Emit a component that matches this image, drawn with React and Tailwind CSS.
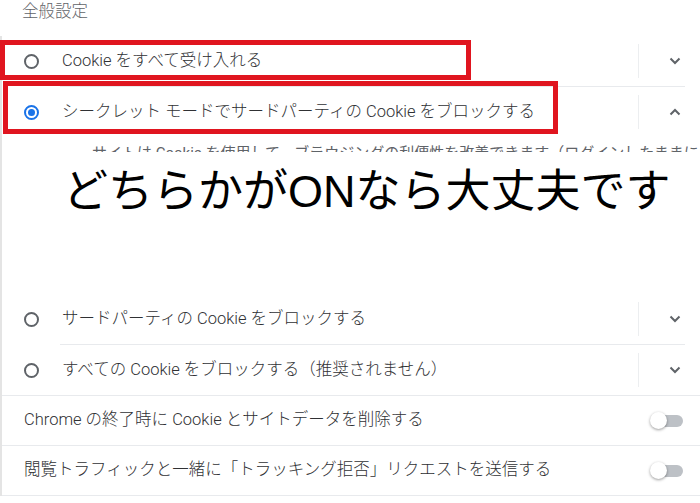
import React from "react";

const jp = "font-[Roboto,'Noto_Sans_CJK_JP',sans-serif]";

function Radio({ checked }) {
  if (checked) {
    return (
      <span className="flex h-[15px] w-[15px] shrink-0 items-center justify-center rounded-full border-2 border-[#1a73e8]">
        <span className="h-[7px] w-[7px] rounded-full bg-[#1a73e8]" />
      </span>
    );
  }
  return <span className="h-[15px] w-[15px] shrink-0 rounded-full border-2 border-[#5f6368]" />;
}

function Chevron({ up }) {
  return (
    <svg width="12" height="8" viewBox="0 0 12 8" className="block">
      <path
        d={up ? "M1.5 6.5 L6 2 L10.5 6.5" : "M1.5 1.5 L6 6 L10.5 1.5"}
        fill="none"
        stroke="#5f6368"
        strokeWidth="2"
      />
    </svg>
  );
}

function Toggle() {
  return (
    <div className="relative h-[16px] w-[34px]">
      <div className="absolute left-[6px] top-[2px] h-[12px] w-[27px] rounded-full bg-[#bdc1c6]" />
      <div className="absolute left-0 top-[-1px] h-[17px] w-[17px] rounded-full bg-white shadow-[0_1px_3px_rgba(0,0,0,0.4)]" />
    </div>
  );
}

function RadioRow({ label, checked, open }) {
  return (
    <div className="flex h-[50px] items-center pl-[22px] pr-[15px]">
      <Radio checked={checked} />
      <span className="ml-[23px] text-[16.5px] font-light text-[#303134] whitespace-nowrap">{label}</span>
      <div className="ml-auto h-[34px] w-px bg-[#eceef0]" />
      <div className="flex w-[46px] justify-end pr-[4px]">
        <Chevron up={open} />
      </div>
    </div>
  );
}

function ToggleRow({ label }) {
  return (
    <div className="flex h-[50px] items-center border-b border-[#e8eaed] pl-[22px] pr-[16px]">
      <span className="text-[16.5px] font-light text-[#303134] whitespace-nowrap">{label}</span>
      <div className="ml-auto">
        <Toggle />
      </div>
    </div>
  );
}

export default function App() {
  return (
    <div className={`relative h-[503px] w-[700px] overflow-hidden bg-white ${jp}`}>
      <div className="h-[36px] pl-[22px] text-[16.5px] font-light leading-[24px] text-[#5f6368]">全般設定</div>

      <div className="border-l-2 border-[#e4e4e4]">
        <RadioRow label="Cookie をすべて受け入れる" />
        <div className="ml-[58px] mr-[15px] h-px bg-[#e8eaed]" />
        <RadioRow label="シークレット モードでサードパーティの Cookie をブロックする" checked open />

        <div className="h-[157px] overflow-hidden pl-[90px] pt-[5px]">
          <p className="whitespace-nowrap text-[15px] leading-[22px] text-[#5f6368]">
            サイトは Cookie を使用して、ブラウジングの利便性を改善できます（ログインしたままにする、など）
          </p>
        </div>

        <RadioRow label="サードパーティの Cookie をブロックする" />
        <div className="ml-[58px] mr-[15px] h-px bg-[#e8eaed]" />
        <RadioRow label="すべての Cookie をブロックする（推奨されません）" />
        <div className="h-px bg-[#e8eaed]" />

        <ToggleRow label="Chrome の終了時に Cookie とサイトデータを削除する" />
        <ToggleRow label="閲覧トラフィックと一緒に「トラッキング拒否」リクエストを送信する" />
      </div>

      {/* annotation overlays */}
      <div className="absolute left-0 top-[40px] h-[40px] w-[471px] border-[5px] border-[#e0151f]" />
      <div className="absolute left-[3px] top-[81px] h-[53px] w-[555px] border-[5px] border-[#e0151f]" />

      <div className="absolute left-[60px] top-[152px] flex h-[80px] w-[640px] items-center bg-white">
        <span className="ml-[3px] mt-[-2px] text-[45px] leading-none text-black whitespace-nowrap font-['Liberation_Sans','Noto_Sans_CJK_JP',sans-serif]">
          どちらかがONなら大丈夫です
        </span>
      </div>
    </div>
  );
}
